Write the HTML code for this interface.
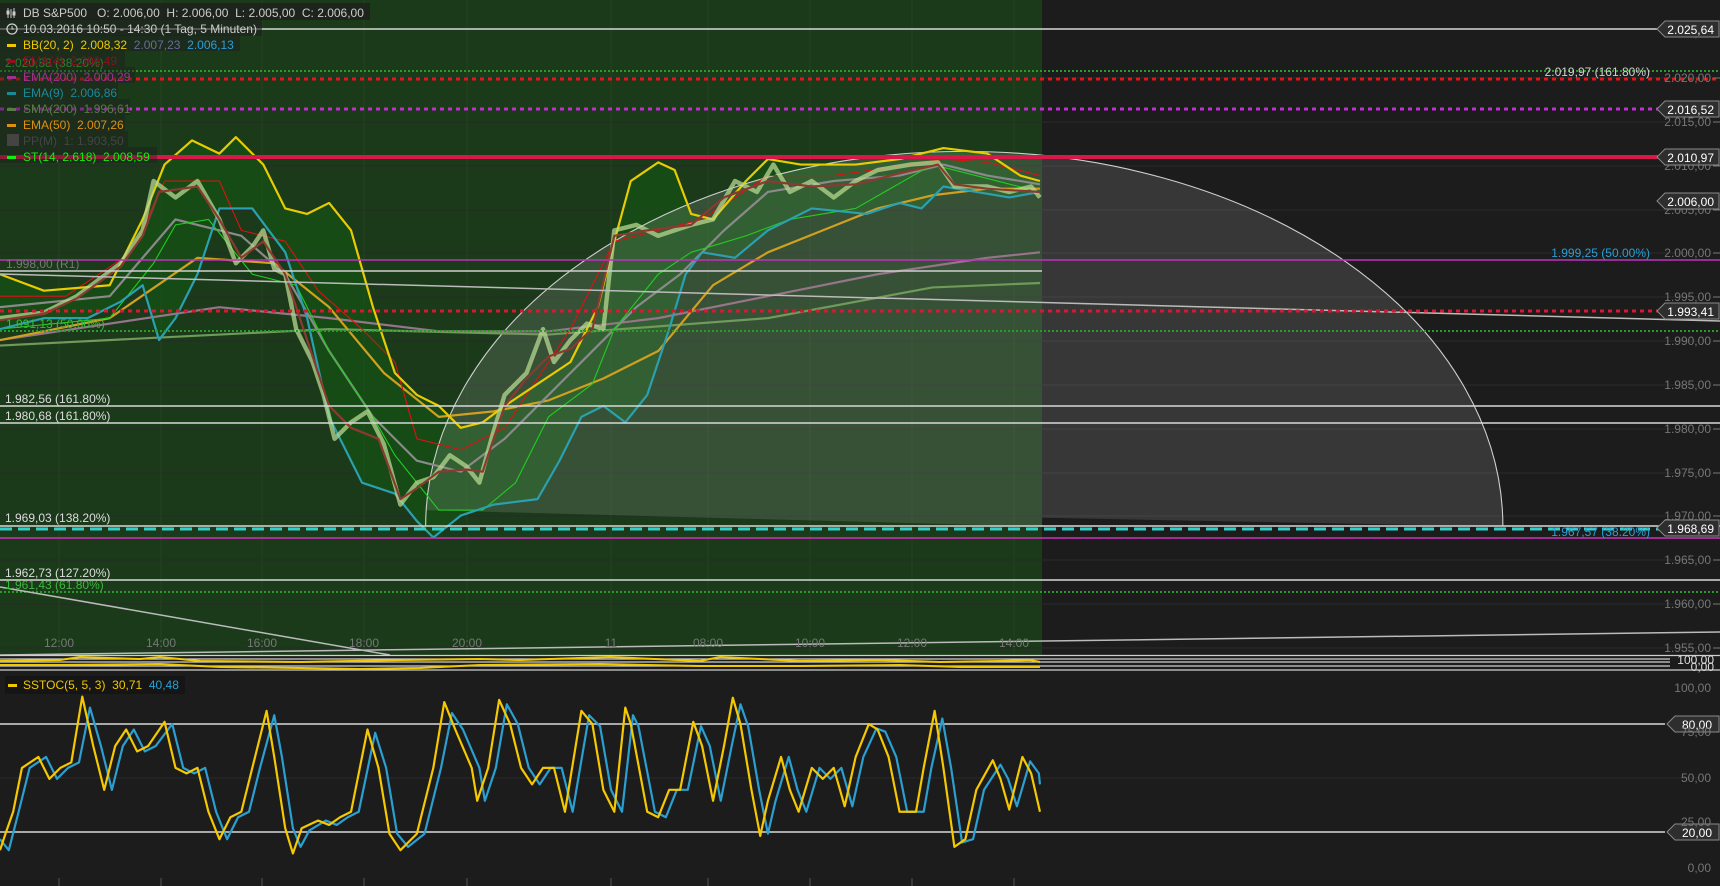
<!DOCTYPE html>
<html><head><meta charset="utf-8"><style>
html,body{margin:0;padding:0;background:#1c1c1c;width:1720px;height:886px;overflow:hidden}
svg{display:block}
text{font-family:"Liberation Sans",sans-serif;font-size:12px;white-space:pre}
.ax{fill:#767676;text-anchor:end}
.tl{fill:#777;text-anchor:middle}
.tag{fill:#fff;text-anchor:end}
</style></head><body>
<svg width="1720" height="886" viewBox="0 0 1720 886" xmlns="http://www.w3.org/2000/svg" xml:space="preserve">
<rect width="1720" height="886" fill="#1c1c1c"/>
<rect x="0" y="0" width="1042" height="655" fill="#1b3a1a"/>
<g stroke="#2a2a2a" stroke-width="1">
<line x1="0" y1="78" x2="1700" y2="78"/><line x1="0" y1="122" x2="1700" y2="122"/><line x1="0" y1="166" x2="1700" y2="166"/><line x1="0" y1="210" x2="1700" y2="210"/><line x1="0" y1="253" x2="1700" y2="253"/><line x1="0" y1="297" x2="1700" y2="297"/><line x1="0" y1="341" x2="1700" y2="341"/><line x1="0" y1="385" x2="1700" y2="385"/><line x1="0" y1="429" x2="1700" y2="429"/><line x1="0" y1="473" x2="1700" y2="473"/><line x1="0" y1="516" x2="1700" y2="516"/><line x1="0" y1="560" x2="1700" y2="560"/><line x1="0" y1="604" x2="1700" y2="604"/><line x1="0" y1="648" x2="1700" y2="648"/>
</g>
<g stroke="#24401f" stroke-width="1">
<line x1="59" y1="0" x2="59" y2="655"/><line x1="161" y1="0" x2="161" y2="655"/><line x1="262" y1="0" x2="262" y2="655"/><line x1="364" y1="0" x2="364" y2="655"/><line x1="467" y1="0" x2="467" y2="655"/><line x1="611" y1="0" x2="611" y2="655"/><line x1="708" y1="0" x2="708" y2="655"/><line x1="810" y1="0" x2="810" y2="655"/><line x1="912" y1="0" x2="912" y2="655"/><line x1="1014" y1="0" x2="1014" y2="655"/>
</g>

<g transform="scale(1.097)" stroke-linejoin="round">
<polygon fill="rgba(20,90,20,0.55)" points="0,250 40,265 100,260 130,200 150,150 175,128 200,140 215,125 240,150 260,190 280,195 300,185 320,210 340,280 360,340 380,360 400,370 420,390 440,385 460,370 490,350 520,330 545,280 560,220 575,165 600,148 615,155 630,195 650,200 680,165 700,145 730,150 780,150 820,145 860,135 900,140 930,160 948,165 948,175 920,180 890,175 860,170 840,190 820,185 790,195 740,190 700,210 670,235 640,230 625,250 610,300 590,360 570,385 550,370 530,380 510,420 490,455 450,460 420,470 395,490 380,475 360,450 330,440 300,380 280,290 260,230 230,190 200,190 180,250 160,290 145,310 130,260 110,275 80,290 40,290 0,300"/>
<path d="M388,480 A491,342 0 0 1 1370,480 L950,472 L950,480 L388,465 Z" fill="rgba(255,255,255,0.12)"/>
<path d="M388,480 A491,342 0 0 1 1370,480" fill="none" stroke="#cfcfcf" stroke-width="1"/>
<polyline fill="none" stroke="#94758a" stroke-width="2" points="0,310 200,280 300,290 400,302 500,302 600,290 700,270 800,250 900,235 948,230"/>
<polyline fill="none" stroke="#6f9a5a" stroke-width="2" points="0,315 300,300 500,305 700,290 850,262 948,258"/>
<polyline fill="none" stroke="#d0a020" stroke-width="2" points="0,310 100,290 180,235 250,240 300,280 350,340 400,380 450,375 500,365 550,345 600,320 650,260 700,230 750,210 800,190 850,178 900,172 948,172"/>
<polyline fill="none" stroke="#8a8a8a" stroke-width="2" points="0,280 100,270 160,200 220,215 260,250 300,320 340,380 380,420 420,430 460,400 500,360 540,320 580,280 620,250 660,210 700,175 760,165 820,160 860,150 900,160 948,168"/>
<polyline fill="none" stroke="#dd1111" stroke-width="1" points="0,270 60,270 120,230 150,165 200,165 220,210 260,220 290,265 330,300 360,330 380,400 420,410 460,390 520,300 560,220 600,210 640,200 700,160 760,160 830,150 860,145 900,148 948,160"/>
<polyline fill="none" stroke="#22cc22" stroke-width="1" points="0,300 100,290 140,240 160,205 190,200 230,250 270,260 300,320 340,380 360,415 400,465 440,465 470,440 500,380 540,350 560,300 600,250 630,230 680,215 720,200 780,190 850,150 948,175"/>
<polyline fill="none" stroke="#2aa0b0" stroke-width="2" points="0,300 40,290 80,290 110,275 130,260 145,310 160,290 180,250 200,190 230,190 260,230 280,290 300,380 330,440 360,450 380,475 395,490 420,470 450,460 490,455 510,420 530,380 550,370 570,385 590,360 610,300 625,250 640,230 670,235 700,210 740,190 790,195 820,185 840,190 860,170 890,175 920,180 948,175"/>
<polyline fill="none" stroke="#e8cc00" stroke-width="2" points="0,250 40,265 100,260 130,200 150,150 175,128 200,140 215,125 240,150 260,190 280,195 300,185 320,210 340,280 360,340 380,360 400,370 420,390 440,385 460,370 490,350 520,330 545,280 560,220 575,165 600,148 615,155 630,195 650,200 680,165 700,145 730,150 780,150 820,145 860,135 900,140 930,160 948,165"/>
<polyline fill="none" stroke="#b7d890" stroke-width="4" opacity="0.75" points="0,290 40,285 70,270 110,240 130,210 140,165 160,180 180,165 200,200 215,240 230,225 240,210 250,245 260,250 270,300 285,330 295,360 305,400 320,385 335,375 350,405 365,460 380,440 395,435 410,415 425,425 437,440 448,400 460,360 480,340 495,300 505,330 520,310 535,295 550,300 560,210 580,205 600,215 630,205 650,200 670,165 690,175 705,150 720,175 740,165 760,180 780,165 800,155 830,150 855,148 870,170 900,170 920,175 940,170 948,180"/>
<polyline fill="none" stroke="#8a3a30" stroke-width="2" points="0,292 40,286 70,272 110,243 130,215 145,175 180,170 200,200 220,235 240,220 260,250 280,310 300,370 320,390 345,400 365,455 380,445 400,430 425,428 440,430 460,370 480,345 500,325 520,318 540,300 560,215 590,210 630,205 660,180 700,165 740,170 780,168 820,158 855,150 870,168 900,172 948,175"/>
</g>

<line x1="0" y1="29" x2="1665" y2="29" stroke="#d8d8d8" stroke-width="1.5"/>
<line x1="0" y1="71" x2="1720" y2="71" stroke="#2a9a2a" stroke-width="2" stroke-dasharray="2 2"/>
<line x1="0" y1="79" x2="1720" y2="79" stroke="#e01818" stroke-width="3" stroke-dasharray="4 4"/>
<line x1="0" y1="109" x2="1665" y2="109" stroke="#c030d0" stroke-width="3" stroke-dasharray="4 4"/>
<line x1="0" y1="157" x2="1665" y2="157" stroke="#d81848" stroke-width="4"/>
<line x1="0" y1="260" x2="1720" y2="260" stroke="#c030c0" stroke-width="1.5"/>
<line x1="0" y1="271" x2="1042" y2="271" stroke="#d0d0d0" stroke-width="1.5"/>
<line x1="0" y1="274" x2="1720" y2="321" stroke="#bbbbbb" stroke-width="1.5"/>
<line x1="0" y1="311" x2="1665" y2="311" stroke="#d81830" stroke-width="3" stroke-dasharray="4 4"/>
<line x1="0" y1="331" x2="1720" y2="331" stroke="#2a9a2a" stroke-width="2" stroke-dasharray="2 2"/>
<line x1="0" y1="406" x2="1720" y2="406" stroke="#d8d8d8" stroke-width="1.5"/>
<line x1="0" y1="423" x2="1720" y2="423" stroke="#d8d8d8" stroke-width="1.5"/>
<line x1="0" y1="526" x2="1720" y2="526" stroke="#d8d8d8" stroke-width="1.5"/>
<line x1="0" y1="529" x2="1665" y2="529" stroke="#30d0c8" stroke-width="3" stroke-dasharray="12 6"/>
<line x1="0" y1="538" x2="1720" y2="538" stroke="#d030c0" stroke-width="1.5"/>
<line x1="0" y1="580" x2="1720" y2="580" stroke="#d8d8d8" stroke-width="1.5"/>
<line x1="0" y1="592" x2="1720" y2="592" stroke="#2a9a2a" stroke-width="2" stroke-dasharray="2 2"/>
<line x1="0" y1="587" x2="390" y2="655" stroke="#bbbbbb" stroke-width="1.5"/>
<line x1="0" y1="655" x2="1720" y2="632" stroke="#bbbbbb" stroke-width="1.5"/>

<g>
<text x="5" y="67" fill="#3cb83c">2.020,88 (38.20%)</text>
<text x="1650" y="76" fill="#d0d0d0" text-anchor="end">2.019,97 (161.80%)</text>
<text x="1650" y="257" fill="#2a9fd6" text-anchor="end">1.999,25 (50.00%)</text>
<text x="6" y="268" fill="#777">1.998,00 (R1)</text>
<text x="6" y="328" fill="#3cb83c">1.991,13 (50.00%)</text>
<text x="5" y="403" fill="#ddd">1.982,56 (161.80%)</text>
<text x="5" y="420" fill="#ddd">1.980,68 (161.80%)</text>
<text x="5" y="522" fill="#ddd">1.969,03 (138.20%)</text>
<text x="1650" y="536" fill="#2a9fd6" text-anchor="end">1.967,57 (38.20%)</text>
<text x="5" y="577" fill="#ddd">1.962,73 (127.20%)</text>
<text x="5" y="589" fill="#3cb83c">1.961,43 (61.80%)</text>
</g>

<g class="ax">
<text x="1711" y="37">2.025,00</text><text x="1711" y="82">2.020,00</text><text x="1711" y="126">2.015,00</text><text x="1711" y="170">2.010,00</text><text x="1711" y="214">2.005,00</text><text x="1711" y="257">2.000,00</text><text x="1711" y="301">1.995,00</text><text x="1711" y="345">1.990,00</text><text x="1711" y="389">1.985,00</text><text x="1711" y="433">1.980,00</text><text x="1711" y="477">1.975,00</text><text x="1711" y="520">1.970,00</text><text x="1711" y="564">1.965,00</text><text x="1711" y="608">1.960,00</text><text x="1711" y="652">1.955,00</text>
</g>
<g stroke="#777"><line x1="1713" y1="78" x2="1720" y2="78"/><line x1="1713" y1="122" x2="1720" y2="122"/><line x1="1713" y1="166" x2="1720" y2="166"/><line x1="1713" y1="210" x2="1720" y2="210"/><line x1="1713" y1="253" x2="1720" y2="253"/><line x1="1713" y1="297" x2="1720" y2="297"/><line x1="1713" y1="341" x2="1720" y2="341"/><line x1="1713" y1="385" x2="1720" y2="385"/><line x1="1713" y1="429" x2="1720" y2="429"/><line x1="1713" y1="473" x2="1720" y2="473"/><line x1="1713" y1="516" x2="1720" y2="516"/><line x1="1713" y1="560" x2="1720" y2="560"/><line x1="1713" y1="604" x2="1720" y2="604"/><line x1="1713" y1="648" x2="1720" y2="648"/></g>

<g stroke="#8a8a8a" stroke-width="1" fill="#2e2e2e">
<path d="M1657,29 L1665,21 L1719,21 L1719,37 L1665,37 Z"/>
<path d="M1657,109 L1665,101 L1719,101 L1719,117 L1665,117 Z"/>
<path d="M1657,157 L1665,149 L1719,149 L1719,165 L1665,165 Z"/>
<path d="M1657,201 L1665,193 L1719,193 L1719,209 L1665,209 Z"/>
<path d="M1657,311 L1665,303 L1719,303 L1719,319 L1665,319 Z"/>
<path d="M1657,528 L1665,520 L1719,520 L1719,536 L1665,536 Z"/>
<path d="M1667,724 L1675,716 L1719,716 L1719,732 L1675,732 Z"/>
<path d="M1667,832 L1675,824 L1719,824 L1719,840 L1675,840 Z"/>
</g>
<g class="tag">
<text x="1714" y="34">2.025,64</text><text x="1714" y="114">2.016,52</text><text x="1714" y="162">2.010,97</text><text x="1714" y="206">2.006,00</text><text x="1714" y="316">1.993,41</text><text x="1714" y="533">1.968,69</text><text x="1712" y="729">80,00</text><text x="1712" y="837">20,00</text>
</g>

<g class="tl">
<text x="59" y="647">12:00</text><text x="161" y="647">14:00</text><text x="262" y="647">16:00</text><text x="364" y="647">18:00</text><text x="467" y="647">20:00</text><text x="611" y="647">11</text><text x="708" y="647">08:00</text><text x="810" y="647">10:00</text><text x="912" y="647">12:00</text><text x="1014" y="647">14:00</text>
</g>

<rect x="0" y="655" width="1720" height="15" fill="#1c1c1c"/>
<g stroke="#cfcfcf" stroke-width="1.2">
<line x1="0" y1="655.5" x2="1720" y2="655.5"/><line x1="0" y1="659" x2="1670" y2="659"/><line x1="0" y1="662" x2="1670" y2="662"/><line x1="0" y1="666" x2="1670" y2="666"/><line x1="0" y1="670" x2="1720" y2="670"/>
</g>
<polyline fill="none" stroke="#f0c800" stroke-width="2" points="0,661 60,660 80,657 140,659 160,657 200,661 300,662 400,660 480,659 520,660 610,657 700,661 720,657 800,661 880,660 940,662 1000,661 1030,660 1040,662"/>
<polyline fill="none" stroke="#f0c800" stroke-width="2" points="0,665 60,665 160,664 220,667 300,668 360,669 420,668 480,665 600,664 700,666 800,666 900,665 960,667 1040,667"/>
<text x="1714" y="664" fill="#ddd" text-anchor="end" font-size="11">100,00</text>
<text x="1714" y="671" fill="#ddd" text-anchor="end" font-size="11">0,00</text>

<g stroke="#2a2a2a"><line x1="0" y1="778" x2="1700" y2="778"/></g>
<line x1="0" y1="724" x2="1665" y2="724" stroke="#d8d8d8" stroke-width="1.5"/>
<line x1="0" y1="832" x2="1665" y2="832" stroke="#d8d8d8" stroke-width="1.5"/>
<g class="ax"><text x="1711" y="692">100,00</text><text x="1711" y="736">75,00</text><text x="1711" y="782">50,00</text><text x="1711" y="826">25,00</text><text x="1711" y="872">0,00</text></g>
<g stroke="#555"><line x1="59" y1="878" x2="59" y2="886"/><line x1="161" y1="878" x2="161" y2="886"/><line x1="262" y1="878" x2="262" y2="886"/><line x1="364" y1="878" x2="364" y2="886"/><line x1="467" y1="878" x2="467" y2="886"/><line x1="611" y1="878" x2="611" y2="886"/><line x1="708" y1="878" x2="708" y2="886"/><line x1="810" y1="878" x2="810" y2="886"/><line x1="912" y1="878" x2="912" y2="886"/><line x1="1014" y1="878" x2="1014" y2="886"/></g>
<g transform="scale(1.097)" stroke-linejoin="round">
<polyline fill="none" stroke="#2a9fd0" stroke-width="2" points="0,765 8,775 17,740 27,700 42,690 52,710 62,700 72,695 82,645 92,680 102,720 112,680 122,665 132,685 142,680 157,660 167,700 177,705 187,700 197,740 207,765 217,745 227,740 237,700 250,652 257,690 267,755 274,772 282,757 297,748 307,752 317,745 327,740 342,668 352,700 362,760 372,772 387,760 402,700 412,650 422,665 437,700 442,730 452,700 462,642 472,660 482,700 492,715 502,700 512,700 522,740 537,652 547,662 557,720 567,740 577,652 582,662 597,740 607,745 617,720 627,720 639,662 647,680 657,730 667,680 675,642 682,662 692,720 700,760 707,730 719,690 727,720 735,740 747,700 757,710 767,700 777,735 787,690 799,664 807,667 817,690 827,740 842,740 849,700 859,655 867,700 877,768 887,765 897,720 912,697 919,710 927,735 939,694 947,705 948,715"/>
<polyline fill="none" stroke="#f5c800" stroke-width="2" points="0,775 5,760 12,740 20,700 35,690 45,710 55,700 65,695 75,635 85,680 95,720 105,680 115,665 125,685 135,680 150,658 160,700 170,705 180,700 190,740 200,765 210,745 220,740 230,700 243,648 250,690 260,755 267,778 275,755 290,748 300,752 310,745 320,740 335,665 345,700 355,760 365,775 380,760 395,700 405,640 415,665 430,700 435,730 445,700 455,638 465,660 475,700 485,715 495,700 505,700 515,740 530,648 540,660 550,720 560,740 570,645 575,660 590,740 600,745 610,720 620,720 632,658 640,680 650,730 660,680 668,636 675,660 685,720 693,762 700,730 712,690 720,720 728,740 740,700 750,710 760,700 770,735 780,690 792,660 800,665 810,690 820,740 835,740 842,700 852,648 860,700 870,772 880,765 890,720 905,693 912,710 920,738 932,690 940,705 948,740"/>
</g>

<g>
<rect x="0" y="3" width="370" height="17" fill="rgba(30,30,30,0.75)"/>
<rect x="0" y="19" width="262" height="17" fill="rgba(30,30,30,0.6)"/>
<rect x="0" y="35" width="240" height="16" fill="rgba(30,30,30,0.5)"/>
<rect x="0" y="51" width="125" height="16" fill="rgba(30,30,30,0.4)"/>
<rect x="0" y="67" width="135" height="16" fill="rgba(30,30,30,0.4)"/>
<rect x="0" y="83" width="118" height="16" fill="rgba(30,30,30,0.4)"/>
<rect x="0" y="99" width="130" height="16" fill="rgba(30,30,30,0.4)"/>
<rect x="0" y="115" width="125" height="16" fill="rgba(30,30,30,0.4)"/>
<rect x="0" y="131" width="128" height="16" fill="rgba(30,30,30,0.4)"/>
<rect x="0" y="147" width="157" height="16" fill="rgba(30,30,30,0.4)"/>
<g stroke="#ccc" stroke-width="1" fill="none"><line x1="8" y1="8" x2="8" y2="18"/><line x1="11" y1="9" x2="11" y2="18"/><line x1="14" y1="8" x2="14" y2="18"/><rect x="7" y="11" width="2" height="3"/><rect x="13" y="12" width="2" height="3"/></g>
<circle cx="12" cy="29" r="5" stroke="#ccc" fill="none" stroke-width="1.3"/><path d="M12,26 V29 H14" stroke="#ccc" fill="none"/>
<rect x="7" y="44" width="9" height="3" fill="#f0c800"/>
<rect x="7" y="60" width="9" height="3" fill="#901020"/>
<rect x="7" y="76" width="9" height="3" fill="#a03090"/>
<rect x="7" y="92" width="9" height="3" fill="#1a8a9a"/>
<rect x="7" y="108" width="9" height="3" fill="#5a7a4a"/>
<rect x="7" y="124" width="9" height="3" fill="#e09010"/>
<rect x="7" y="134" width="12" height="12" fill="#444"/>
<rect x="7" y="156" width="9" height="3" fill="#10ee10"/>
<text x="23" y="17" fill="#ccc">DB S&amp;P500   O: 2.006,00  H: 2.006,00  L: 2.005,00  C: 2.006,00</text>
<text x="23" y="33" fill="#ccc">10.03.2016 10:50 - 14:30 (1 Tag, 5 Minuten)</text>
<text x="23" y="49" fill="#f0c800">BB(20, 2)  2.008,32  <tspan fill="#6a6a9a">2.007,23</tspan>  <tspan fill="#2a9fd6">2.006,13</tspan></text>
<text x="23" y="65" fill="#8a1020">EMA(4)  2.006,49</text>
<text x="23" y="81" fill="#a03090">EMA(200)  2.000,29</text>
<text x="23" y="97" fill="#1a8a9a">EMA(9)  2.006,86</text>
<text x="23" y="113" fill="#5a7a4a">SMA(200)  1.996,61</text>
<text x="23" y="129" fill="#e09010">EMA(50)  2.007,26</text>
<text x="23" y="145" fill="#444">PP(M)  1: 1.903,50</text>
<text x="23" y="161" fill="#10ee10">ST(14, 2.618)  2.008,59</text>
</g>
<rect x="5" y="676" width="180" height="18" fill="rgba(20,20,20,0.8)"/>
<rect x="8" y="684" width="9" height="3" fill="#f0c800"/>
<text x="23" y="689" fill="#f0c800">SSTOC(5, 5, 3)  30,71  <tspan fill="#2a9fd6">40,48</tspan></text>
</svg>
</body></html>
